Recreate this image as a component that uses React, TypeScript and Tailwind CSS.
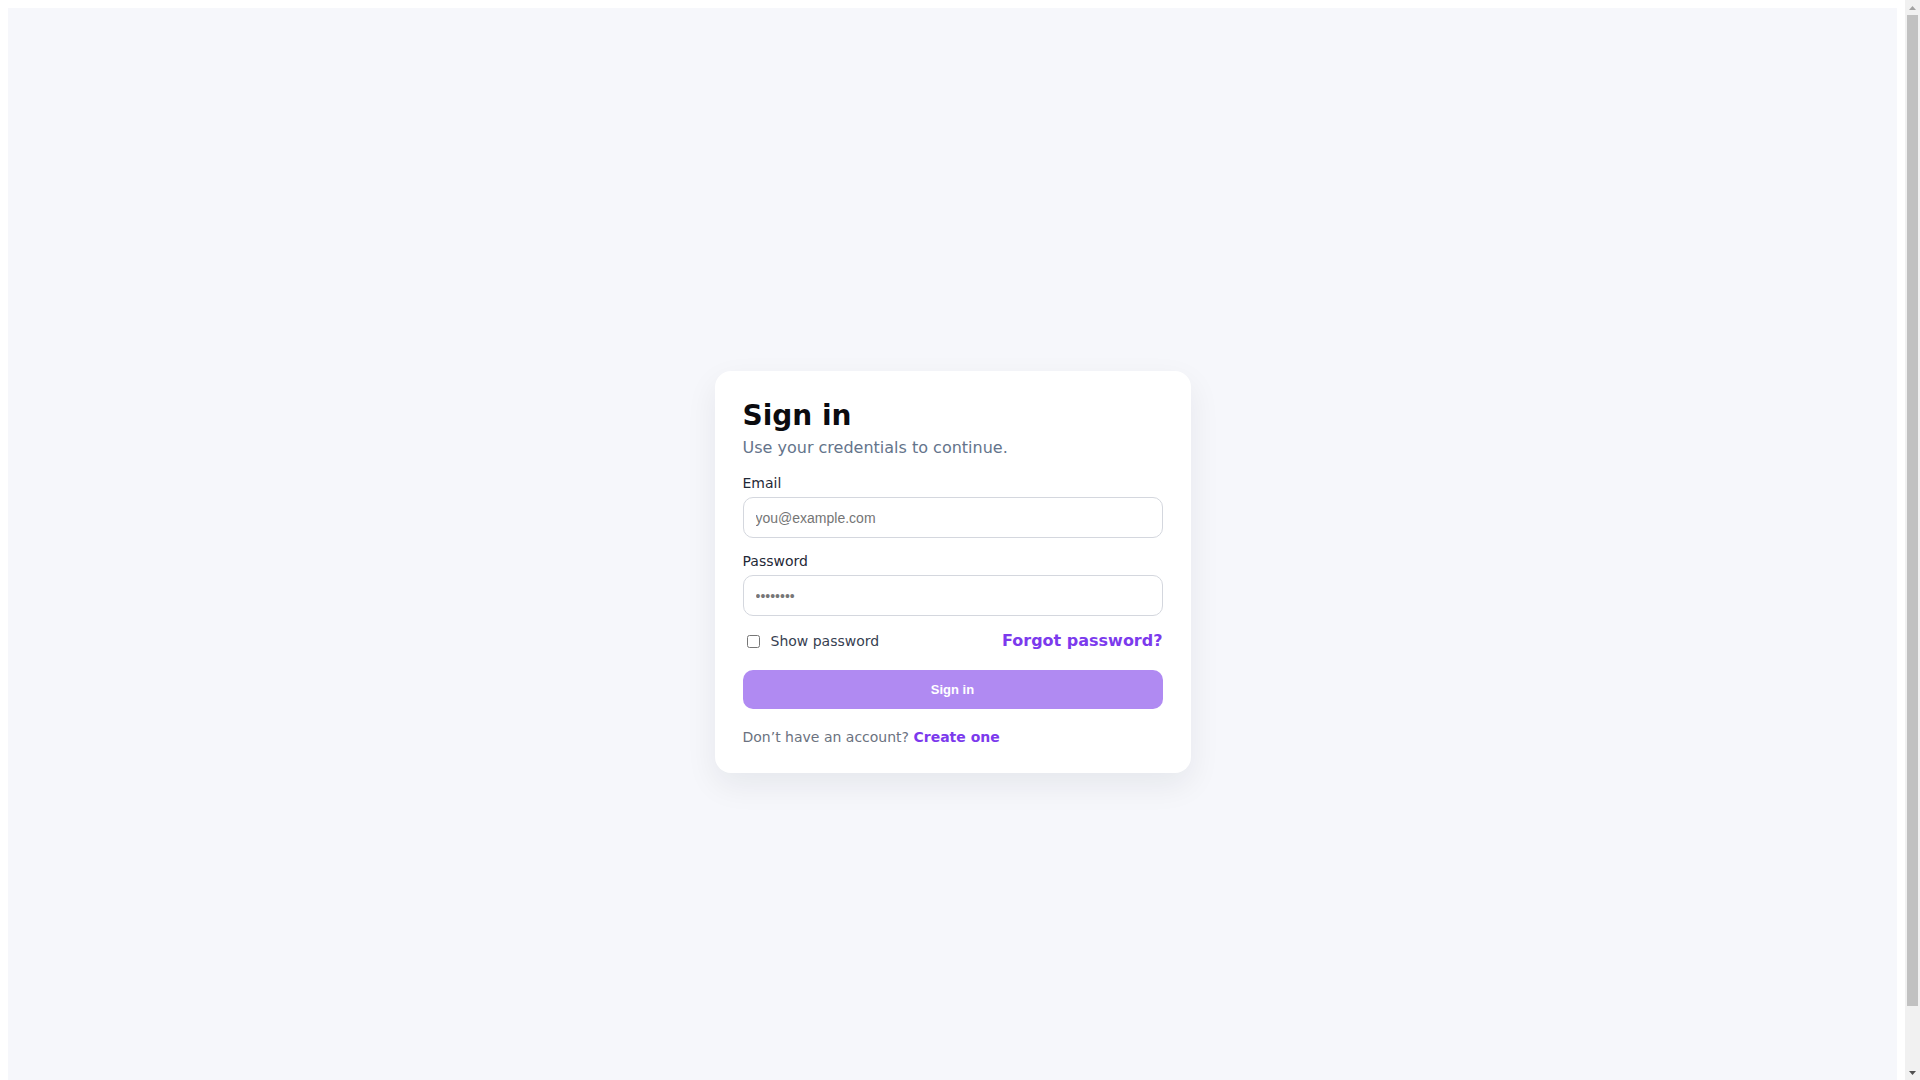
import { useState } from "react";

const SANS = "font-['DejaVu_Sans',sans-serif]";
const CONTROL = "font-['Liberation_Sans',Arial,sans-serif]";

function Field({
  label,
  type,
  placeholder,
  defaultValue,
  className = "",
}: {
  label: string;
  type: string;
  placeholder?: string;
  defaultValue?: string;
  className?: string;
}) {
  return (
    <label className={`flex flex-col ${className}`}>
      <span className="text-sm leading-5 text-[#1f2937]">{label}</span>
      <input
        type={type}
        placeholder={placeholder}
        defaultValue={defaultValue}
        className={`${CONTROL} mt-[4px] h-[41px] w-full rounded-[10px] border border-[#d4d7de] bg-white px-3 text-sm text-[#777] outline-none placeholder:text-[#757575]`}
      />
    </label>
  );
}

// classic browser scrollbar, as in the screenshot
function Scrollbar() {
  return (
    <div className="flex h-[1080px] w-[15px] shrink-0 flex-col bg-[#f1f1f1]">
      <div className="flex h-[15px] items-center justify-center">
        <svg width="7" height="4" viewBox="0 0 7 4">
          <path d="M3.5 0 7 4H0z" fill="#a3a3a3" />
        </svg>
      </div>
      <div className="mx-[2px] h-[991px] bg-[#c1c1c1]" />
      <div className="flex-1" />
      <div className="flex h-[15px] items-center justify-center">
        <svg width="7" height="4" viewBox="0 0 7 4">
          <path d="M0 0h7L3.5 4z" fill="#505050" />
        </svg>
      </div>
    </div>
  );
}

export default function App() {
  const [show, setShow] = useState(false);

  return (
    <div className="flex h-[1080px] w-full overflow-hidden bg-white">
      <div className="h-[1080px] min-w-0 flex-1 overflow-hidden p-2">
        <div className={`${SANS} flex h-[1128px] items-center justify-center bg-[#f6f7fb]`}>
          <div className="w-[476px] rounded-2xl bg-white px-7 pt-7 pb-[26px] shadow-[0_12px_32px_rgba(15,23,42,0.07)]">
            <h1 className="text-[28px] leading-[34px] font-bold text-[#0b0b0f]">Sign in</h1>
            <p className="mt-[3px] text-base leading-6 text-[#64748b]">
              Use your credentials to continue.
            </p>

            <Field
              label="Email"
              type="email"
              placeholder="you@example.com"
              className="mt-[13px]"
            />
            <Field
              label="Password"
              type={show ? "text" : "password"}
              defaultValue="password"
              className="mt-[13px]"
            />

            <div className="mt-[13px] flex h-6 items-center justify-between">
              <label className="flex items-center text-sm leading-5 text-[#374151]">
                <input
                  type="checkbox"
                  checked={show}
                  onChange={(e) => setShow(e.target.checked)}
                  className="my-0 mr-[3px] ml-1 h-[13px] w-[13px]"
                />
                <span className="ml-2">Show password</span>
              </label>
              <a href="#" className="text-base leading-6 font-bold text-[#7c3aed]">
                Forgot password?
              </a>
            </div>

            <button
              type="button"
              disabled
              className={`${CONTROL} mt-[17px] h-[39px] w-full rounded-[10px] bg-[#b08af2] text-[13px] font-bold text-white`}
            >
              Sign in
            </button>

            <p className="mt-[18px] text-sm leading-5 text-[#6b7280]">
              Don’t have an account?{" "}
              <a href="#" className="font-bold text-[#7c3aed]">
                Create one
              </a>
            </p>
          </div>
        </div>
      </div>
      <Scrollbar />
    </div>
  );
}
